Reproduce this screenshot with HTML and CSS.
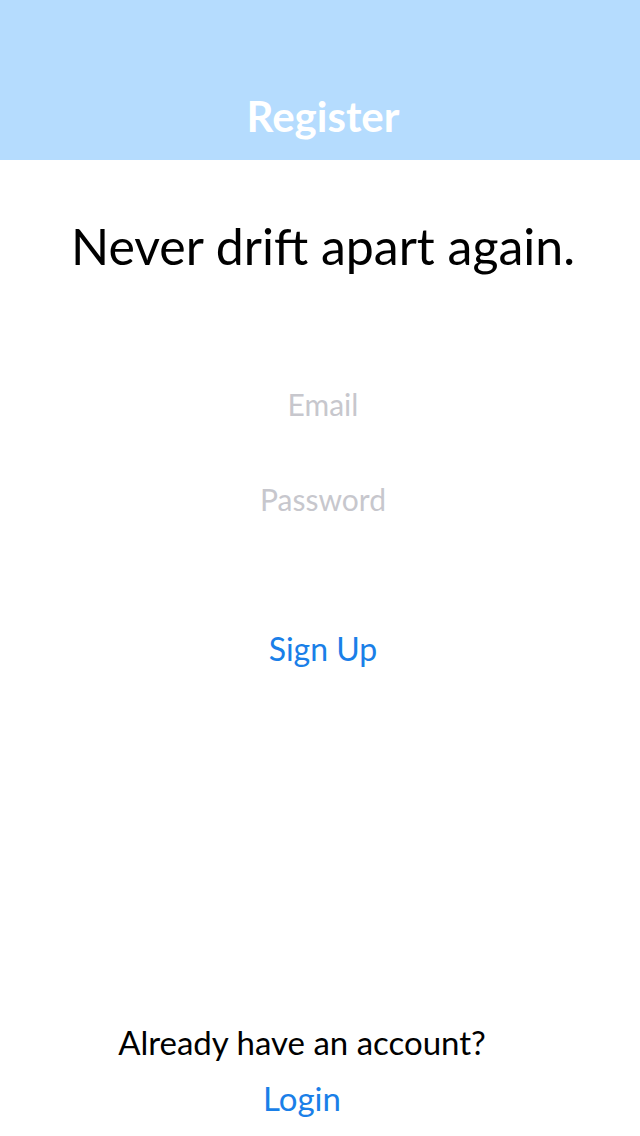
FILE: index.html
```html
<!DOCTYPE html>
<html>
<head>
<meta charset="utf-8">
<link rel="stylesheet" href="styles.css">
</head>
<body>
<div class="screen">
  <header class="navbar"><span class="nav-title">Register</span></header>
  <main class="content">
    <h1 class="headline">Never drift apart again.</h1>
    <div class="fields">
      <div class="field">Email</div>
      <div class="field">Password</div>
    </div>
    <button class="link signup">Sign Up</button>
  </main>
  <footer class="footer">
    <p class="question">Already have an account?</p>
    <button class="link login">Login</button>
  </footer>
</div>
</body>
</html>
```
FILE: styles.css
```css
* { box-sizing: border-box; }
html, body { margin: 0; padding: 0; background: #fff; }
body { font-family: Lato, "Open Sans", sans-serif; }
.screen {
  width: 640px;
  height: 1136px;
  display: flex;
  flex-direction: column;
  overflow: hidden;
}
.navbar {
  height: 160px;
  background: #b5dcfe;
  display: flex;
  align-items: flex-end;
  justify-content: center;
  padding-bottom: 22px;
}
.nav-title {
  color: #fff;
  font-weight: 700;
  font-size: 42px;
  line-height: 44px;
  padding-left: 6px;
}
.content {
  display: flex;
  flex-direction: column;
  align-items: center;
  padding-left: 6px;
  flex: 1;
}
.headline {
  margin: 56px 0 0;
  font-weight: 400;
  font-size: 50px;
  line-height: 60px;
  color: #000;
}
.fields {
  display: flex;
  flex-direction: column;
  align-items: center;
  margin-top: 108px;
  gap: 55px;
}
.field {
  font-size: 30px;
  line-height: 40px;
  color: #c7c7cd;
}
.link {
  border: 0;
  background: none;
  padding: 0;
  font-family: inherit;
  color: #1a7fe8;
  font-size: 32px;
  line-height: 40px;
  cursor: pointer;
}
.signup { margin-top: 110px; }
.footer {
  display: flex;
  flex-direction: column;
  align-items: center;
  padding-right: 36px;
  padding-bottom: 18px;
}
.question {
  margin: 0;
  font-size: 33px;
  line-height: 40px;
  color: #000;
}
.login { margin-top: 16px; font-size: 33px; }
```
